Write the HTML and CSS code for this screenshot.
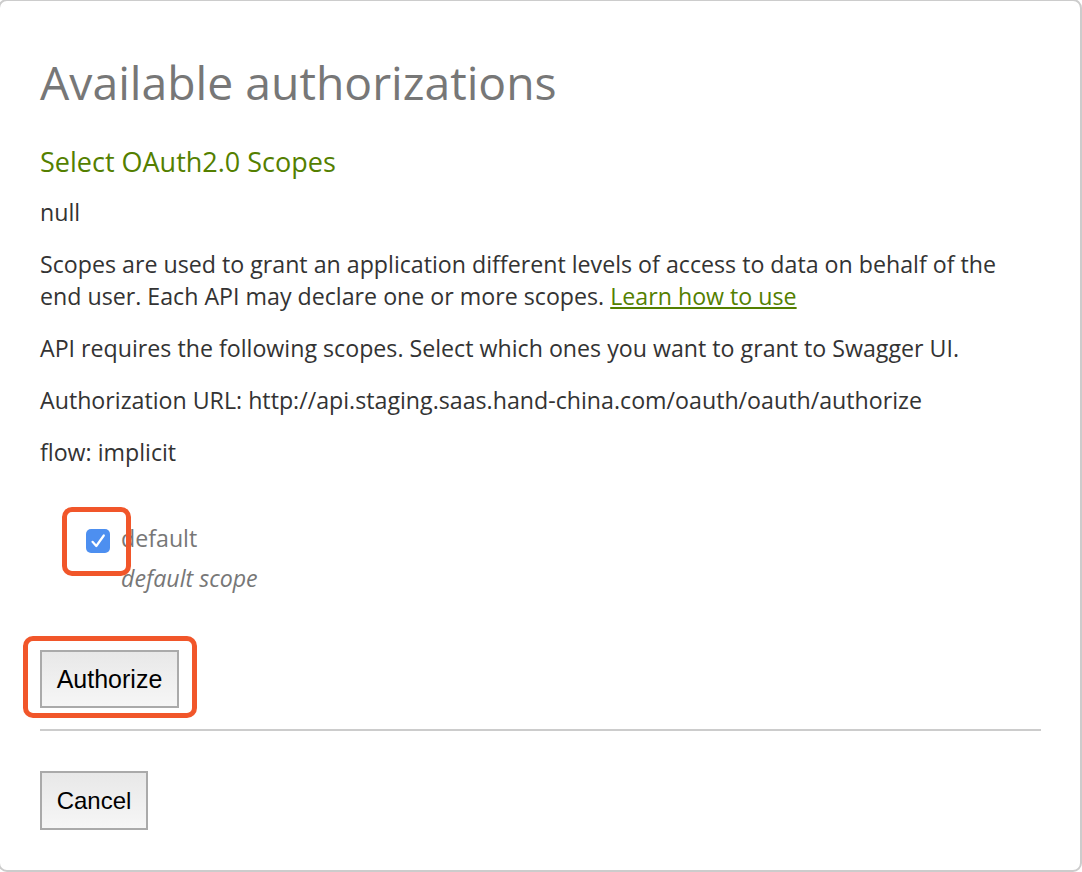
FILE: index.html
```html
<!DOCTYPE html>
<html lang="en">
<head>
<meta charset="utf-8">
<title>Available authorizations</title>
<link rel="stylesheet" href="styles.css">
</head>
<body>
<div class="card">
  <h3 class="title">Available authorizations</h3>
  <h4 class="subtitle">Select OAuth2.0 Scopes</h4>
  <p class="text">null</p>
  <p class="text">Scopes are used to grant an application different levels of access to data on behalf of the end user. Each API may declare one or more scopes. <a class="link" href="#">Learn how to use</a></p>
  <p class="text">API requires the following scopes. Select which ones you want to grant to Swagger UI.</p>
  <p class="text">Authorization URL: http://api.staging.saas.hand-china.com/oauth/oauth/authorize</p>
  <p class="text">flow: implicit</p>
  <div class="scope">
    <span class="check">
      <svg width="24" height="24" viewBox="0 0 24 24"><rect x="0" y="0" width="24" height="24" rx="5" fill="#4d8ff0"/><path d="M6.5 12.8 L10.3 17 L17.8 6.5" fill="none" stroke="#fff" stroke-width="2.2" stroke-linecap="round" stroke-linejoin="round"/></svg>
      <span class="mark mark-check"></span>
    </span>
    <div class="scope-text">
      <div class="scope-name">default</div>
      <div class="scope-desc">default scope</div>
    </div>
  </div>
  <div class="btn-wrap">
    <button class="btn btn-auth" type="button">Authorize</button>
    <span class="mark mark-btn"></span>
  </div>
  <div class="divider"></div>
  <button class="btn btn-cancel" type="button">Cancel</button>
</div>
</body>
</html>
```
FILE: styles.css
```css
html, body {
  margin: 0;
  padding: 0;
  background: #fff;
  overflow: hidden;
}
.card {
  box-sizing: border-box;
  width: 1084px;
  height: 873px;
  margin: -1px 0 0 -2px;
  border: 2px solid #cccccc;
  border-radius: 9px;
  padding: 54px 39px 0 40px;
  font-family: "Open Sans", "DejaVu Sans", sans-serif;
  color: #333;
}
.title {
  margin: 0;
  font-size: 46.3px;
  line-height: 56px;
  font-weight: 400;
  color: #777;
}
.subtitle {
  margin: 33px 0 0;
  font-size: 27px;
  line-height: 36px;
  font-weight: 400;
  color: #547f00;
}
.text {
  max-width: 980px;
  margin: 20px 0 0;
  font-size: 23.2px;
  line-height: 32px;
  color: #333;
}
.subtitle + .text {
  margin-top: 16px;
}
.link {
  color: #547f00;
  text-decoration: underline;
}
.scope {
  display: flex;
  gap: 11px;
  margin: 54px 0 0 46px;
}
.check {
  position: relative;
  width: 24px;
  height: 24px;
  margin-top: 7px;
  flex: none;
}
.check svg {
  display: block;
}
.scope-text {
  font-size: 23.2px;
  line-height: 32px;
  color: #777;
}
.scope-desc {
  margin-top: 8px;
  font-style: italic;
}
.mark {
  position: absolute;
  box-sizing: border-box;
  border: 5px solid #f1562a;
  border-radius: 10px;
  z-index: 2;
}
.mark-check {
  left: -24px;
  top: -22px;
  width: 69px;
  height: 69px;
}
.btn-wrap {
  position: relative;
  display: inline-block;
  margin-top: 56px;
  vertical-align: top;
}
.btn {
  display: block;
  box-sizing: border-box;
  border: 2px solid #aaaaaa;
  border-radius: 0;
  background: linear-gradient(#e8e8e8, #f6f6f6);
  font-family: "Liberation Sans", Arial, sans-serif;
  font-size: 24px;
  color: #000;
  padding: 0;
  margin: 0;
}
.btn-auth {
  width: 139px;
  height: 58px;
  font-size: 25px;
}
.mark-btn {
  left: -17px;
  top: -14px;
  width: 174px;
  height: 82px;
}
.divider {
  height: 2px;
  background: #cccccc;
  margin-top: 21px;
}
.btn-cancel {
  width: 108px;
  height: 59px;
  margin-top: 40px;
}
```
